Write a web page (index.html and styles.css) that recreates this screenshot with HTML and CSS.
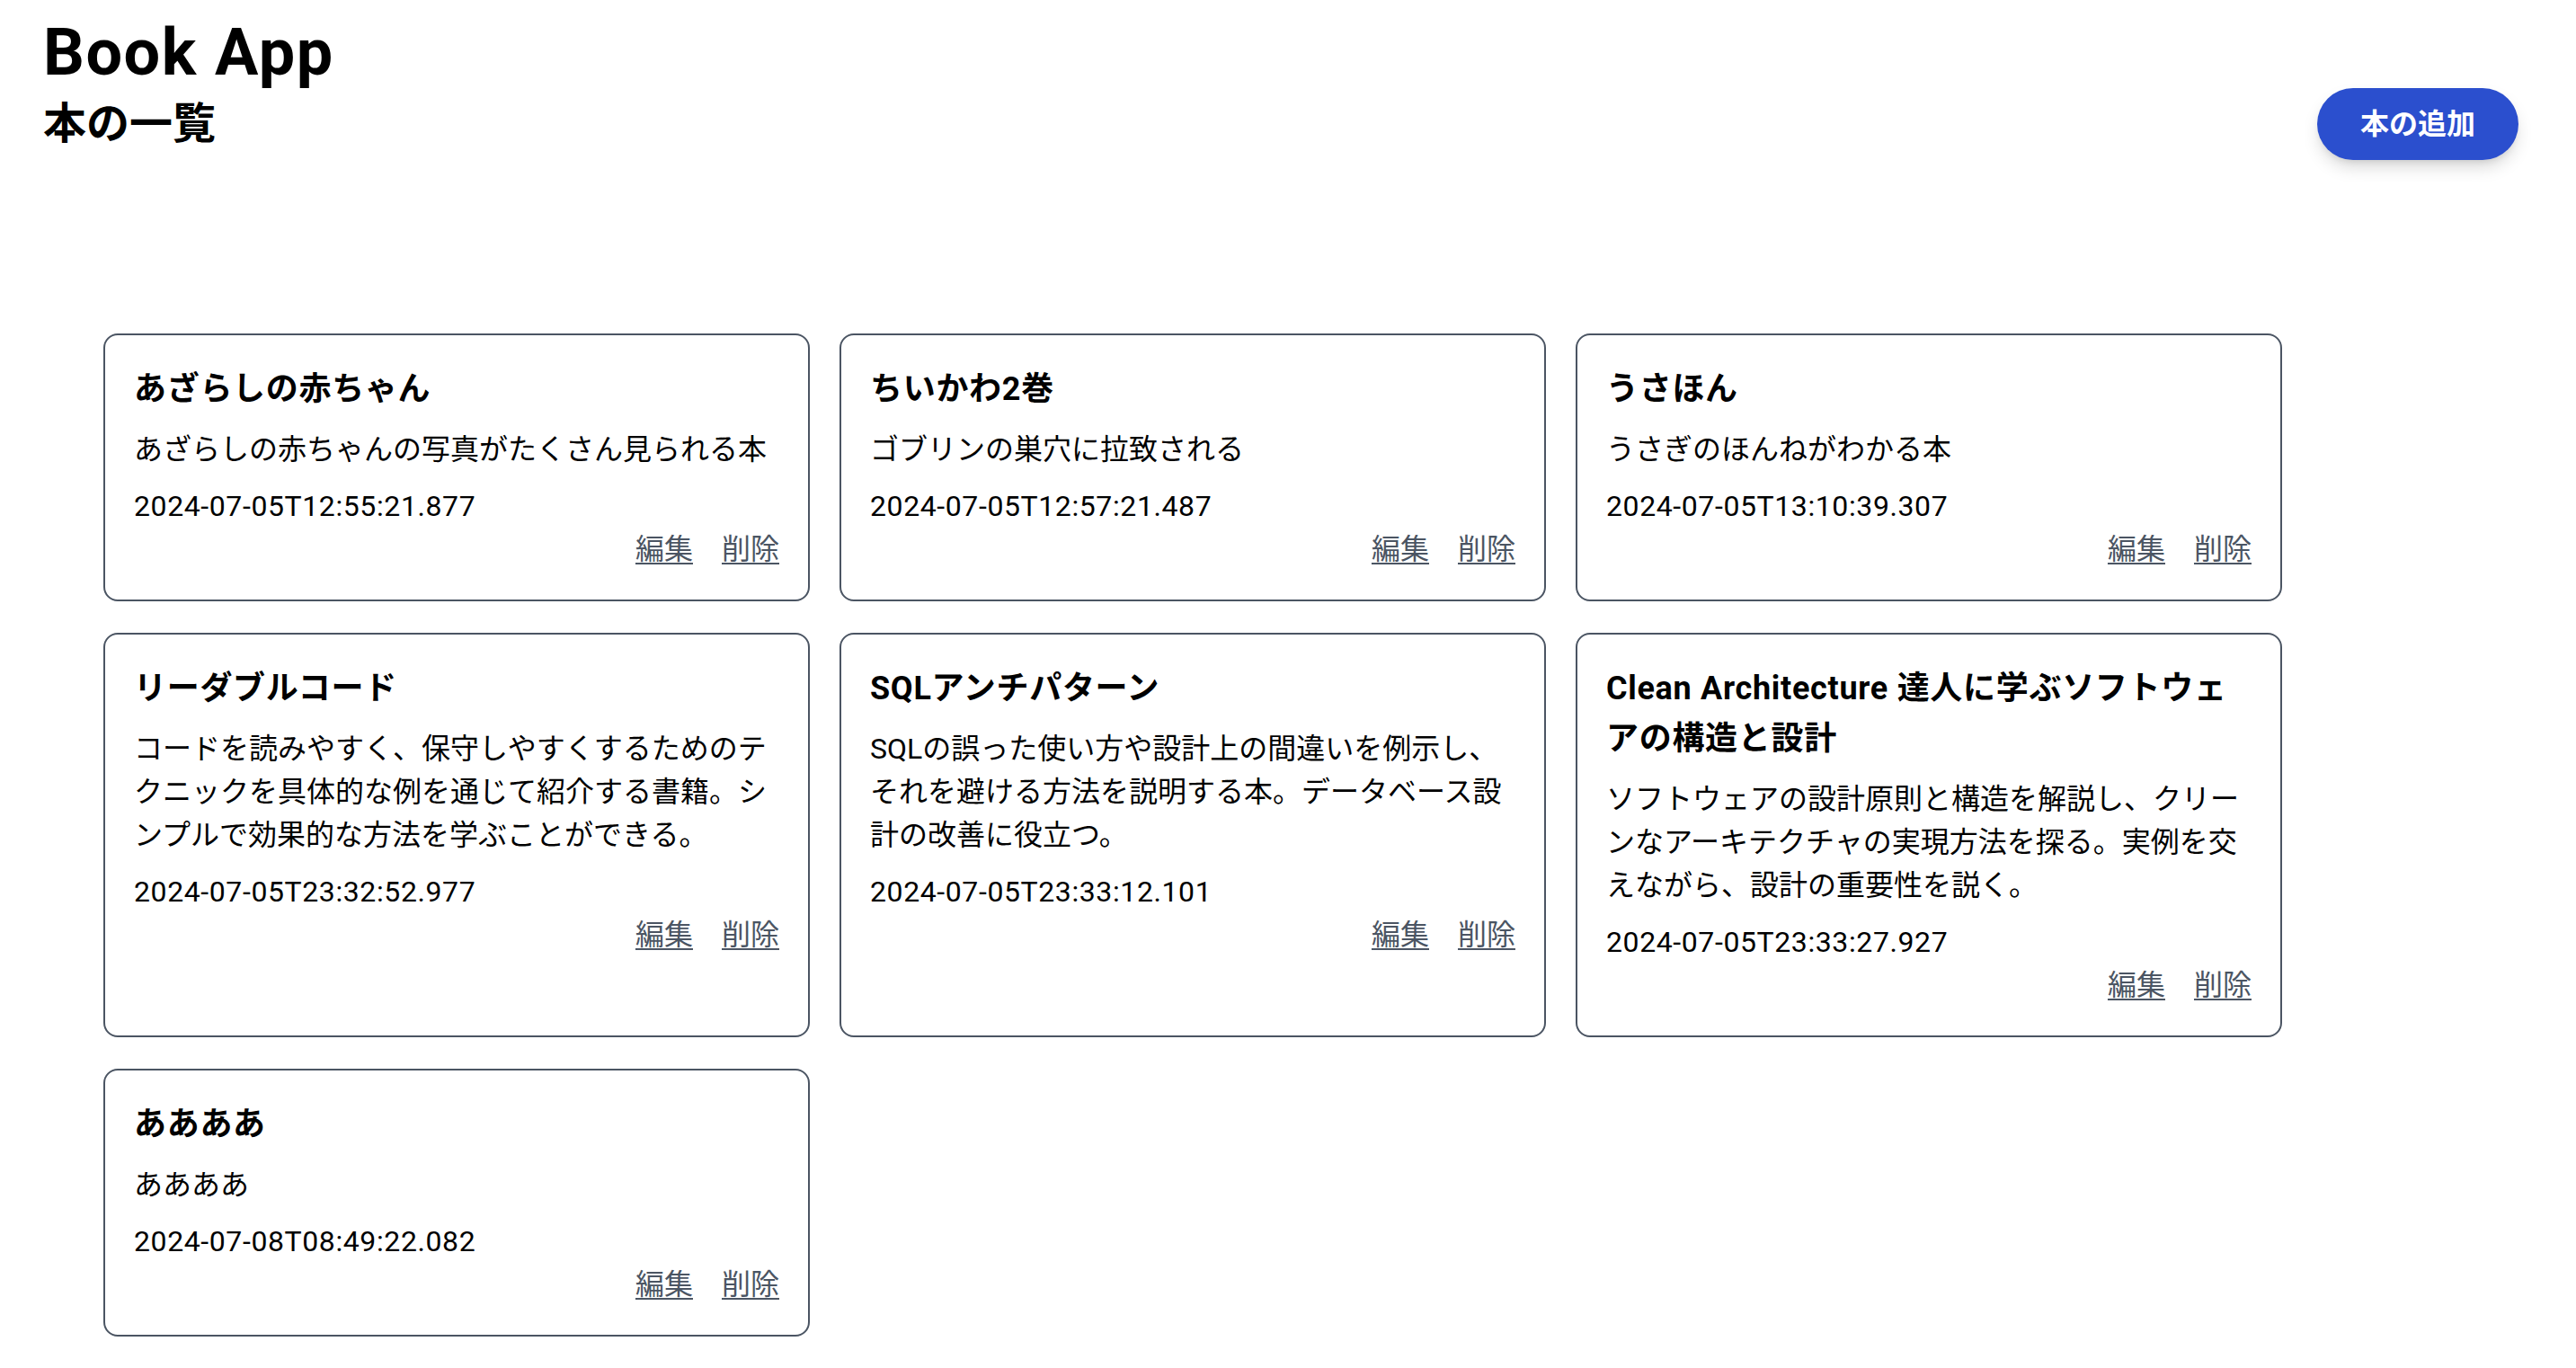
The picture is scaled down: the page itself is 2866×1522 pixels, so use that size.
FILE: index.html
```html
<!DOCTYPE html>
<html lang="ja">
<head>
<meta charset="utf-8">
<title>Book App</title>
<link rel="stylesheet" href="styles.css">
</head>
<body>
<div class="page">
  <header class="header">
    <h1 class="app-title">Book App</h1>
    <div class="header-row">
      <h2 class="page-title">本の一覧</h2>
      <button class="add-btn" type="button">本の追加</button>
    </div>
  </header>

  <main class="book-grid">
    <article class="card">
      <h3 class="card-title">あざらしの赤ちゃん</h3>
      <p class="card-desc">あざらしの赤ちゃんの写真がたくさん見られる本</p>
      <p class="card-date">2024-07-05T12:55:21.877</p>
      <div class="card-actions"><a href="#" class="card-link">編集</a><a href="#" class="card-link">削除</a></div>
    </article>
    <article class="card">
      <h3 class="card-title">ちいかわ2巻</h3>
      <p class="card-desc">ゴブリンの巣穴に拉致される</p>
      <p class="card-date">2024-07-05T12:57:21.487</p>
      <div class="card-actions"><a href="#" class="card-link">編集</a><a href="#" class="card-link">削除</a></div>
    </article>
    <article class="card">
      <h3 class="card-title">うさほん</h3>
      <p class="card-desc">うさぎのほんねがわかる本</p>
      <p class="card-date">2024-07-05T13:10:39.307</p>
      <div class="card-actions"><a href="#" class="card-link">編集</a><a href="#" class="card-link">削除</a></div>
    </article>
    <article class="card">
      <h3 class="card-title">リーダブルコード</h3>
      <p class="card-desc">コードを読みやすく、保守しやすくするためのテクニックを具体的な例を通じて紹介する書籍。シンプルで効果的な方法を学ぶことができる。</p>
      <p class="card-date">2024-07-05T23:32:52.977</p>
      <div class="card-actions"><a href="#" class="card-link">編集</a><a href="#" class="card-link">削除</a></div>
    </article>
    <article class="card">
      <h3 class="card-title">SQLアンチパターン</h3>
      <p class="card-desc">SQLの誤った使い方や設計上の間違いを例示し、それを避ける方法を説明する本。データベース設計の改善に役立つ。</p>
      <p class="card-date">2024-07-05T23:33:12.101</p>
      <div class="card-actions"><a href="#" class="card-link">編集</a><a href="#" class="card-link">削除</a></div>
    </article>
    <article class="card">
      <h3 class="card-title">Clean Architecture 達人に学ぶソフトウェアの構造と設計</h3>
      <p class="card-desc">ソフトウェアの設計原則と構造を解説し、クリーンなアーキテクチャの実現方法を探る。実例を交えながら、設計の重要性を説く。</p>
      <p class="card-date">2024-07-05T23:33:27.927</p>
      <div class="card-actions"><a href="#" class="card-link">編集</a><a href="#" class="card-link">削除</a></div>
    </article>
    <article class="card">
      <h3 class="card-title">ああああ</h3>
      <p class="card-desc">ああああ</p>
      <p class="card-date">2024-07-08T08:49:22.082</p>
      <div class="card-actions"><a href="#" class="card-link">編集</a><a href="#" class="card-link">削除</a></div>
    </article>
  </main>
</div>
</body>
</html>
```
FILE: styles.css
```css
* {
  box-sizing: border-box;
}

html, body {
  margin: 0;
  padding: 0;
  background: #ffffff;
}

body {
  font-family: Roboto, "Noto Sans CJK JP", sans-serif;
  color: #000000;
}

.page {
  padding: 20px 64px 40px 48px;
}

.header {
  display: flex;
  flex-direction: column;
}

.app-title {
  margin: 0;
  font-size: 72px;
  line-height: 78px;
  font-weight: 700;
  letter-spacing: 1.5px;
}

.header-row {
  display: flex;
  justify-content: space-between;
  align-items: center;
}

.page-title {
  margin: 0;
  font-size: 48px;
  line-height: 64px;
  font-weight: 700;
}

.add-btn {
  font-family: Roboto, "Noto Sans CJK JP", sans-serif;
  font-size: 32px;
  line-height: 48px;
  font-weight: 700;
  color: #ffffff;
  background: #2b4fce;
  border: none;
  border-radius: 9999px;
  padding: 16px 48px;
  box-shadow: 0 10px 20px -4px rgba(0, 0, 0, 0.18), 0 4px 8px -4px rgba(0, 0, 0, 0.12);
  cursor: pointer;
}

.book-grid {
  display: grid;
  grid-template-columns: repeat(3, 786px);
  column-gap: 33px;
  row-gap: 35px;
  margin: 193px 0 0 67px;
}

.card {
  border: 2px solid #4b5563;
  border-radius: 16px;
  padding: 32px;
  background: #ffffff;
  display: flex;
  flex-direction: column;
}

.card-title {
  margin: 0;
  font-size: 36px;
  line-height: 56px;
  font-weight: 700;
  letter-spacing: 0.7px;
}

.card-desc {
  margin: 15px 0 0;
  font-size: 32px;
  line-height: 48px;
}

.card-date {
  margin: 15px 0 0;
  font-size: 32px;
  line-height: 48px;
  letter-spacing: 0.6px;
}

.card-actions {
  display: flex;
  justify-content: flex-end;
  gap: 32px;
}

.card-link {
  font-size: 32px;
  line-height: 48px;
  color: #4b5563;
  text-decoration: underline;
  text-decoration-thickness: 2px;
  text-underline-offset: 4px;
}
```
